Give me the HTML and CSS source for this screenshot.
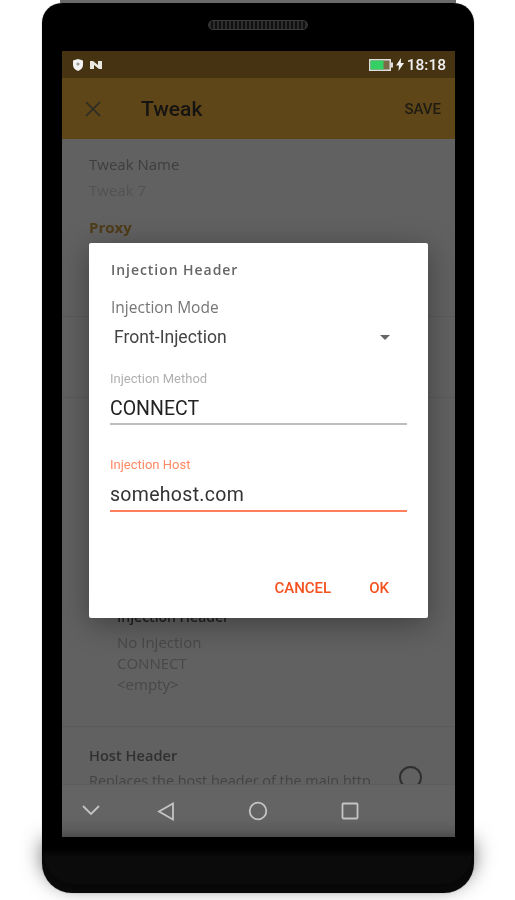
FILE: index.html
```html
<!DOCTYPE html>
<html lang="en">
<head>
    <meta charset="UTF-8">
    <meta name="viewport" content="width=device-width, initial-scale=1.0">
    <title>Tweak</title>
    <link rel="stylesheet" href="styles.css">
</head>
<body>

<div class="phone">
    <div class="speaker"></div>

    <div class="screen">
        <div class="status-bar">
            <svg class="status-icon" width="12" height="14" viewBox="0 0 12 14">
                <path d="M6 1l5 1.500v4.500c0 3-2.200 5-5 6-2.800-1-5-3-5-6V2.500z" fill="#f2f2f2"/>
                <circle cx="6" cy="6" r="1.600" fill="#9a9a9a"/>
            </svg>
            <svg class="status-icon" width="12" height="10" viewBox="0 0 12 10">
                <path d="M0 1h3l5 4V1h4v8H9L4 5v4H0z" fill="#e8e8e0"/>
            </svg>
            <div class="status-right">
                <svg width="24" height="12" viewBox="0 0 24 12">
                    <rect x="0" y="0" width="22" height="12" fill="#ddd"/>
                    <rect x="22" y="3.500" width="2" height="5" fill="#ddd"/>
                    <rect x="1.500" y="1.500" width="19" height="9" fill="#7a6a48"/>
                    <rect x="1.500" y="1.500" width="13" height="9" fill="#35d065"/>
                </svg>
                <svg width="8" height="13" viewBox="0 0 8 13">
                    <path d="M5 0L0 7.500h3L2.500 13 8 5H4.800z" fill="#f2f2f2"/>
                </svg>
                <span class="clock">18:18</span>
            </div>
        </div>

        <div class="toolbar">
            <svg class="close-icon" width="16" height="16" viewBox="0 0 16 16">
                <path d="M1 1l14 14M15 1L1 15" stroke="#2c2c26" stroke-width="1.700" fill="none"/>
            </svg>
            <div class="toolbar-title">Tweak</div>
            <div class="toolbar-save">SAVE</div>
        </div>

        <div class="content">
            <div class="section section-name">
                <div class="field-label">Tweak Name</div>
                <div class="field-value">Tweak 7</div>
                <div class="section-title">Proxy</div>
            </div>
            <div class="section section-proxy"></div>
            <div class="section section-injection">
                <div class="row-title">Injection Header</div>
                <div class="row-lines">
                    <div>No Injection</div>
                    <div>CONNECT</div>
                    <div>&lt;empty&gt;</div>
                </div>
            </div>
            <div class="section section-host">
                <div class="host-text">
                    <div class="host-title">Host Header</div>
                    <div class="host-desc">Replaces the host header of the main http</div>
                </div>
                <div class="radio"></div>
            </div>
        </div>

        <div class="nav-bar">
            <svg class="nav-down" width="18" height="12" viewBox="0 0 18 12">
                <path d="M1 1l8 8 8-8" stroke="#c4c4c4" stroke-width="1.800" fill="none"/>
            </svg>
            <svg width="18" height="19" viewBox="0 0 18 19">
                <path d="M16 1.500v16L2 9.500z" stroke="#c4c4c4" stroke-width="1.800" fill="none"/>
            </svg>
            <svg width="20" height="20" viewBox="0 0 20 20">
                <circle cx="10" cy="10" r="8.300" stroke="#c4c4c4" stroke-width="1.800" fill="none"/>
            </svg>
            <svg width="18" height="18" viewBox="0 0 18 18">
                <rect x="1.500" y="1.500" width="15" height="15" rx="1" stroke="#c4c4c4" stroke-width="1.800" fill="none"/>
            </svg>
        </div>

        <div class="dialog">
            <div class="dialog-title">Injection Header</div>
            <div class="dialog-label">Injection Mode</div>
            <div class="select-row">
                <span>Front-Injection</span>
                <span class="select-arrow"></span>
            </div>
            <div class="input-group">
                <div class="input-label">Injection Method</div>
                <div class="input-value">CONNECT</div>
            </div>
            <div class="input-group input-active">
                <div class="input-label">Injection Host</div>
                <div class="input-value">somehost.com</div>
            </div>
            <div class="dialog-actions">
                <span>CANCEL</span>
                <span>OK</span>
            </div>
        </div>
    </div>
</div>

</body>
</html>
```

FILE: styles.css
```css
html {
    background-color: white;
}
body {
    margin: 0;
    padding: 0;
    height: 900px;
    overflow: hidden;
    font-family: "Roboto", sans-serif;
}
.phone {
    position: relative;
    box-sizing: border-box;
    width: 432px;
    height: 890px;
    margin: 3px 0 0 42px;
    padding: 48px 19px 0 20px;
    background: linear-gradient(to bottom, black 95%, #0b0b0b 96%);
    border-radius: 20px 20px 30px 30px;
    box-shadow: 0 0 1px #777;
    filter: blur(0.5px);
}
.phone::before {
    content: "";
    position: absolute;
    top: -3px;
    left: 18px;
    right: 18px;
    height: 3px;
    background-color: #6a6a6a;
}
.phone::after {
    content: "";
    position: absolute;
    left: 2px;
    right: 2px;
    bottom: 9px;
    height: 42px;
    border-radius: 0 0 30px 30px;
    box-shadow: 0 0 22px rgba(0, 0, 0, 0.75);
}
.speaker {
    position: absolute;
    top: 17px;
    left: 166px;
    width: 100px;
    height: 10px;
    box-sizing: border-box;
    border: 1px solid #3a3a3a;
    border-radius: 5px;
    background: repeating-linear-gradient(to right, #2c2c2c 0, #2c2c2c 2px, #111 2px, #111 4px);
}
.screen {
    position: relative;
    display: flex;
    flex-direction: column;
    width: 393px;
    height: 786px;
    background-color: #616161;
    overflow: hidden;
}
.status-bar {
    display: flex;
    align-items: center;
    gap: 6px;
    height: 27px;
    padding: 0 9px 0 10px;
    background-color: #463312;
    flex-shrink: 0;
}
.status-right {
    display: flex;
    align-items: center;
    gap: 3px;
    margin-left: auto;
}
.clock {
    color: #f0f0f0;
    font-size: 15.500px;
    font-weight: 500;
}
.toolbar {
    display: flex;
    align-items: center;
    height: 61px;
    padding: 0 14px 0 23px;
    background-color: #5f4618;
    flex-shrink: 0;
}
.toolbar-title {
    margin-left: 40px;
    font-size: 21px;
    font-weight: 500;
    color: #161412;
}
.toolbar-save {
    margin-left: auto;
    font-size: 15px;
    font-weight: 500;
    color: #1f1c14;
}
.content {
    flex: 1;
    min-height: 0;
    overflow: hidden;
    font-family: "Open Sans", sans-serif;
}
.section {
    box-sizing: border-box;
    border-bottom: 1px solid #5a5a5a;
}
.section-name {
    height: 178px;
    padding: 16px 27px 0;
}
.section-proxy {
    height: 81px;
}
.field-label {
    font-size: 15px;
    line-height: 19px;
    color: #3e3e3e;
}
.field-value {
    margin-top: 7px;
    font-size: 15px;
    line-height: 19px;
    color: #525252;
}
.section-title {
    margin-top: 18px;
    font-size: 15px;
    line-height: 19px;
    font-weight: 700;
    color: #4f3c18;
}
.section-injection {
    height: 329px;
    padding: 209px 55px 0;
}
.row-title {
    font-size: 14px;
    line-height: 19px;
    font-weight: 600;
    color: #222;
}
.row-lines {
    margin-top: 6px;
    font-size: 15px;
    line-height: 21px;
    color: #484848;
}
.section-host {
    display: flex;
    align-items: flex-start;
    justify-content: space-between;
    padding: 18px 33px 0 27px;
    border-bottom: 0;
}
.host-title {
    font-size: 14.600px;
    line-height: 20px;
    font-weight: 600;
    color: #303030;
}
.host-desc {
    margin-top: 6px;
    font-size: 14.400px;
    line-height: 19px;
    color: #444;
    white-space: nowrap;
}
.radio {
    box-sizing: border-box;
    width: 23px;
    height: 23px;
    margin-top: 21px;
    border: 2px solid #2f2f2f;
    border-radius: 50%;
}
.nav-bar {
    display: flex;
    align-items: center;
    gap: 73px;
    height: 52px;
    padding-left: 20px;
    background-color: #646464;
    flex-shrink: 0;
    box-shadow: 0 -1px 0 #5d5d5d;
}
.nav-down {
    margin-right: -16px;
}
.dialog {
    position: absolute;
    top: 192px;
    left: 27px;
    box-sizing: border-box;
    display: flex;
    flex-direction: column;
    width: 339px;
    height: 375px;
    padding: 18px 21px 0;
    background-color: white;
    border-radius: 2px;
    box-shadow: 0 6px 30px rgba(0, 0, 0, 0.35);
}
.dialog-title {
    margin-left: 1px;
    font-family: "Open Sans", sans-serif;
    font-size: 14px;
    line-height: 18px;
    font-weight: 600;
    letter-spacing: 0.950px;
    color: #666;
}
.dialog-label {
    margin: 19px 0 0 1px;
    font-family: "Open Sans", sans-serif;
    font-size: 15.500px;
    line-height: 19px;
    color: #757575;
}
.select-row {
    display: flex;
    align-items: center;
    justify-content: space-between;
    height: 28px;
    margin-top: 6px;
    padding: 0 17px 0 4px;
    font-size: 17.600px;
    color: #444;
}
.select-arrow {
    width: 0;
    height: 0;
    border-left: 5px solid transparent;
    border-right: 5px solid transparent;
    border-top: 5px solid #666;
}
.input-group {
    margin: 20px 0 0;
    width: 297px;
    border-bottom: 2px solid #bdbdbd;
}
.input-active {
    margin-top: 32px;
    border-bottom-color: #ff7f5f;
}
.input-label {
    font-size: 13px;
    line-height: 16px;
    color: #b0b0b0;
}
.input-active .input-label {
    color: #ff8a65;
}
.input-value {
    margin-top: 9px;
    padding-bottom: 2px;
    font-size: 19.500px;
    line-height: 25px;
    color: #222;
}
.input-active .input-value {
    padding-bottom: 3px;
    letter-spacing: 0.300px;
    color: #333;
}
.dialog-actions {
    display: flex;
    justify-content: flex-end;
    gap: 38px;
    margin-top: 66px;
    padding-right: 18px;
    font-size: 15px;
    line-height: 20px;
    font-weight: 500;
    color: #f4511e;
}
```
